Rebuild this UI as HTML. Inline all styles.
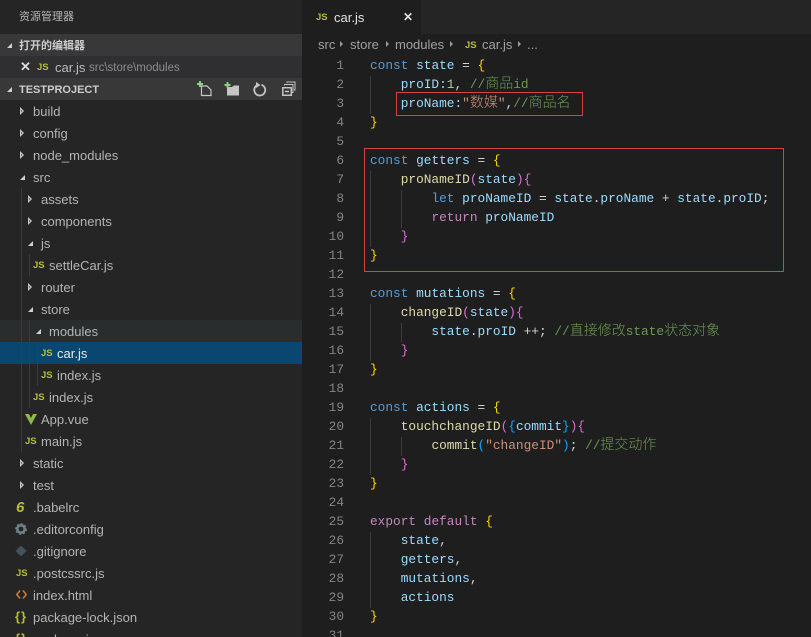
<!DOCTYPE html>
<html><head><meta charset="utf-8">
<style>
html,body{margin:0;padding:0;background:#1e1e1e}
#r{position:relative;width:811px;height:637px;overflow:hidden;background:#1e1e1e;font-family:"Liberation Sans","Noto Sans CJK SC",sans-serif}
#s{position:absolute;left:0;top:0;width:302px;height:637px;background:#252526}
.bar{position:absolute;left:0;width:302px}
.t{position:absolute;margin-top:1px;white-space:nowrap;font-size:13px;line-height:22px;height:22px;color:#b4b4b4}
.js{position:absolute;margin-top:1px;font:bold 9.500px/22px "Liberation Sans",sans-serif;color:#b5bd3e;height:22px}
.ac,.ar{position:absolute;width:0;height:0}
.ar{border-left:4px solid #c5c5c5;border-top:4px solid transparent;border-bottom:4px solid transparent}
.ar:after{content:"";position:absolute;left:-3.500px;top:-1.500px;width:0;height:0;border-left:1.500px solid #252526;border-top:1.500px solid transparent;border-bottom:1.500px solid transparent}
.ac{margin-top:1px;border-right:5px solid #d0d0d0;border-top:5px solid transparent}
.g{position:absolute;width:1px;background:#3c3c3c}
#c{position:absolute;left:0;top:0}
.l{position:absolute;white-space:pre;left:370px;font:12.800px/19px "Liberation Mono","Noto Sans CJK SC",monospace;height:19px;color:#9cdcfe}
.n{position:absolute;left:320px;width:24px;text-align:right;font:12.800px/19px "Liberation Mono",monospace;color:#858585;height:19px}
.k{color:#569cd6}.p{color:#c586c0}.y{color:#ffd700}.m{color:#da70d6}.b{color:#179fff}.f{color:#dcdcaa}.o{color:#d4d4d4}.s{color:#ce9178}.q{color:#6a9955}.w{color:#d4d4d4}.u{color:#b5cea8}
.box{position:absolute;border:1px solid #d9423e;box-sizing:border-box}
.cj{font-size:14px;line-height:1;font-weight:300}
.cr{position:absolute;font:13px/20px "Liberation Sans",sans-serif;color:#a0a0a0;top:35px;white-space:nowrap}
.ca{position:absolute;top:41px;width:0;height:0;border-left:3px solid #9a9a9a;border-top:3.500px solid transparent;border-bottom:3.500px solid transparent}
</style></head><body>
<div id="r">
<div id="s">
<div class="t" style="left:19px;top:5px;font-size:11px;color:#b5b5b5">资源管理器</div>
<div class="bar" style="top:34px;height:22px;background:#383838"></div>
<div class="bar" style="top:56px;height:22px;background:#2f2f31"></div>
<div class="bar" style="top:78px;height:22px;background:#383838"></div>
<div class="bar" style="top:320px;height:22px;background:#2a2d2e"></div>
<div class="bar" style="top:342px;height:22px;background:#094771"></div>

<div class="ac" style="left:7px;top:42px"></div>
<div class="t" style="left:19px;top:34px;font-size:11px;font-weight:bold;color:#cccccc">打开的编辑器</div>
<div class="t" style="left:20px;top:55px;font-size:13px;font-weight:bold;color:#dddddd">✕</div>
<div class="js" style="left:37px;top:56px">JS</div>
<div class="t" style="left:55px;top:56px;color:#bbbbbb">car.js</div>
<div class="t" style="left:89px;top:56px;font-size:11.500px;color:#8d8d8d">src\store\modules</div>
<div class="ac" style="left:7px;top:86px"></div>
<div class="t" style="left:19px;top:78px;font-size:11px;font-weight:bold;color:#cccccc">TESTPROJECT</div>

<svg style="position:absolute;left:190px;top:70px" width="120" height="40" fill="none">
<path d="M11.500 16h5.500l4 4v5.500H11.500z" stroke="#c5c5c5" stroke-width="1.200"/>
<path d="M7 14h6M10 11v6" stroke="#89d185" stroke-width="2"/>
<path d="M37 17h5l2-1.500h5V25.500H37z" fill="#c5c5c5"/>
<path d="M34.500 15h6M37.500 12v6" stroke="#89d185" stroke-width="2"/>
<path d="M71.500 14.800a5.500 5.500 0 1 1-4 .2" stroke="#c5c5c5" stroke-width="1.800"/>
<path d="M66 12l4.500 3-4.500 3z" fill="#c5c5c5"/>
<path d="M92.800 17.800h8.500v7.500h-8.500z" stroke="#c5c5c5" stroke-width="1.500"/>
<path d="M95 21.500h4" stroke="#c5c5c5" stroke-width="1.500"/>
<path d="M94.500 15.500v-1h8.500v8h-1M97 13v-1h8v8h-1" stroke="#c5c5c5" stroke-width="1"/>
</svg>

<div class="ar" style="left:20px;top:107px"></div><div class="t" style="left:33px;top:100px">build</div>
<div class="ar" style="left:20px;top:129px"></div><div class="t" style="left:33px;top:122px">config</div>
<div class="ar" style="left:20px;top:151px"></div><div class="t" style="left:33px;top:144px">node_modules</div>
<div class="ac" style="left:20px;top:174px"></div><div class="t" style="left:33px;top:166px">src</div>
<div class="g" style="left:21px;top:188px;height:264px"></div>
<div class="ar" style="left:28px;top:195px"></div><div class="t" style="left:41px;top:188px">assets</div>
<div class="ar" style="left:28px;top:217px"></div><div class="t" style="left:41px;top:210px">components</div>
<div class="ac" style="left:28px;top:240px"></div><div class="t" style="left:41px;top:232px">js</div>
<div class="g" style="left:29px;top:254px;height:22px"></div>
<div class="js" style="left:33px;top:254px">JS</div><div class="t" style="left:49px;top:254px">settleCar.js</div>
<div class="ar" style="left:28px;top:283px"></div><div class="t" style="left:41px;top:276px">router</div>
<div class="ac" style="left:28px;top:306px"></div><div class="t" style="left:41px;top:298px">store</div>
<div class="g" style="left:29px;top:320px;height:88px"></div>
<div class="ac" style="left:36px;top:328px"></div><div class="t" style="left:49px;top:320px">modules</div>
<div class="g" style="left:37px;top:342px;height:44px"></div>
<div class="js" style="left:41px;top:342px">JS</div><div class="t" style="left:57px;top:342px;color:#e8e8e8">car.js</div>
<div class="js" style="left:41px;top:364px">JS</div><div class="t" style="left:57px;top:364px">index.js</div>
<div class="js" style="left:33px;top:386px">JS</div><div class="t" style="left:49px;top:386px">index.js</div>
<svg style="position:absolute;left:24px;top:413px" width="14" height="13"><path d="M1 1h12L7 12z" fill="#8dbb4a"/><path d="M5 1h4L7 5z" fill="#252526"/></svg>
<div class="t" style="left:41px;top:408px">App.vue</div>
<div class="js" style="left:25px;top:430px">JS</div><div class="t" style="left:41px;top:430px">main.js</div>
<div class="ar" style="left:20px;top:459px"></div><div class="t" style="left:33px;top:452px">static</div>
<div class="ar" style="left:20px;top:481px"></div><div class="t" style="left:33px;top:474px">test</div>
<div class="t" style="left:16px;top:496px;font:italic bold 15px/22px 'Liberation Sans',sans-serif;color:#b5bd3e">6</div>
<div class="t" style="left:33px;top:496px">.babelrc</div>
<svg style="position:absolute;left:15px;top:523px" width="12" height="12"><circle cx="6" cy="6" r="3.700" fill="none" stroke="#6d8086" stroke-width="2.600"/><circle cx="6" cy="6" r="5.200" fill="none" stroke="#6d8086" stroke-width="1.400" stroke-dasharray="2 2"/></svg>
<div class="t" style="left:33px;top:518px">.editorconfig</div>
<svg style="position:absolute;left:15px;top:545px" width="12" height="12"><path d="M6 .500L11.500 6 6 11.500.500 6z" fill="#41535b"/></svg>
<div class="t" style="left:33px;top:540px">.gitignore</div>
<div class="js" style="left:16px;top:562px">JS</div><div class="t" style="left:33px;top:562px">.postcssrc.js</div>
<svg style="position:absolute;left:16px;top:590px" width="11" height="9" fill="none"><path d="M4 .500L.800 4.500 4 8.500M7 .500l3.200 4-3.200 4" stroke="#c8793e" stroke-width="1.500"/></svg>
<div class="t" style="left:33px;top:584px">index.html</div>
<div class="t" style="left:15px;top:605px;font-weight:bold;font-size:13px;color:#b5bd3e;letter-spacing:1px">{}</div>
<div class="t" style="left:33px;top:606px">package-lock.json</div>
<div class="t" style="left:15px;top:627px;font-weight:bold;font-size:13px;color:#b5bd3e;letter-spacing:1px">{}</div>
<div class="t" style="left:33px;top:628px">package.json</div>
</div>

<div style="position:absolute;left:302px;top:0;width:509px;height:34px;background:#252526"></div>
<div style="position:absolute;left:302px;top:0;width:119px;height:34px;background:#1e1e1e"></div>
<div class="js" style="left:316px;top:6px">JS</div>
<div class="t" style="left:334px;top:6px;color:#e0e0e0">car.js</div>
<div class="t" style="left:403px;top:5px;font-size:12px;font-weight:bold;color:#dddddd">✕</div>

<div class="cr" style="left:318px">src</div><div class="ca" style="left:340px"></div>
<div class="cr" style="left:350px">store</div><div class="ca" style="left:386px"></div>
<div class="cr" style="left:395px">modules</div><div class="ca" style="left:450px"></div>
<div class="js" style="left:465px;top:34px;color:#b5bd3e">JS</div>
<div class="cr" style="left:482px">car.js</div><div class="ca" style="left:518px"></div>
<div class="cr" style="left:527px">...</div>

<div class="g" style="left:370px;top:76px;height:38px"></div>
<div class="g" style="left:370px;top:171px;height:76px"></div>
<div class="g" style="left:401px;top:190px;height:38px"></div>
<div class="g" style="left:370px;top:304px;height:57px"></div>
<div class="g" style="left:401px;top:323px;height:19px"></div>
<div class="g" style="left:370px;top:418px;height:57px"></div>
<div class="g" style="left:401px;top:437px;height:19px"></div>
<div class="g" style="left:370px;top:532px;height:76px"></div>

<div id="c">
<div class="n" style="top:56px">1</div><div class="l" style="top:56px"><span class="k">const</span> state <span class="w">=</span> <span class="y">{</span></div>
<div class="n" style="top:75px">2</div><div class="l" style="top:75px">    proID:<span class="u">1</span><span class="w">,</span> <span class="q">//<span class="cj">商品</span>id</span></div>
<div class="n" style="top:94px">3</div><div class="l" style="top:94px">    proName:<span class="s">"<span class="cj">数媒</span>"</span><span class="w">,</span><span class="q">//<span class="cj">商品名</span></span></div>
<div class="n" style="top:113px">4</div><div class="l" style="top:113px"><span class="y">}</span></div>
<div class="n" style="top:132px">5</div>
<div class="n" style="top:151px">6</div><div class="l" style="top:151px"><span class="k">const</span> getters <span class="w">=</span> <span class="y">{</span></div>
<div class="n" style="top:170px">7</div><div class="l" style="top:170px">    <span class="f">proNameID</span><span class="m">(</span>state<span class="m">){</span></div>
<div class="n" style="top:189px">8</div><div class="l" style="top:189px">        <span class="k">let</span> proNameID <span class="w">=</span> state<span class="w">.</span>proName <span class="w">+</span> state<span class="w">.</span>proID<span class="w">;</span></div>
<div class="n" style="top:208px">9</div><div class="l" style="top:208px">        <span class="p">return</span> proNameID</div>
<div class="n" style="top:227px">10</div><div class="l" style="top:227px">    <span class="m">}</span></div>
<div class="n" style="top:246px">11</div><div class="l" style="top:246px"><span class="y">}</span></div>
<div class="n" style="top:265px">12</div>
<div class="n" style="top:284px">13</div><div class="l" style="top:284px"><span class="k">const</span> mutations <span class="w">=</span> <span class="y">{</span></div>
<div class="n" style="top:303px">14</div><div class="l" style="top:303px">    <span class="f">changeID</span><span class="m">(</span>state<span class="m">){</span></div>
<div class="n" style="top:322px">15</div><div class="l" style="top:322px">        state<span class="w">.</span>proID <span class="w">++;</span> <span class="q">//<span class="cj">直接修改</span>state<span class="cj">状态对象</span></span></div>
<div class="n" style="top:341px">16</div><div class="l" style="top:341px">    <span class="m">}</span></div>
<div class="n" style="top:360px">17</div><div class="l" style="top:360px"><span class="y">}</span></div>
<div class="n" style="top:379px">18</div>
<div class="n" style="top:398px">19</div><div class="l" style="top:398px"><span class="k">const</span> actions <span class="w">=</span> <span class="y">{</span></div>
<div class="n" style="top:417px">20</div><div class="l" style="top:417px">    <span class="f">touchchangeID</span><span class="m">(</span><span class="b">{</span>commit<span class="b">}</span><span class="m">){</span></div>
<div class="n" style="top:436px">21</div><div class="l" style="top:436px">        <span class="f">commit</span><span class="b">(</span><span class="s">"changeID"</span><span class="b">)</span><span class="w">;</span> <span class="q">//<span class="cj">提交动作</span></span></div>
<div class="n" style="top:455px">22</div><div class="l" style="top:455px">    <span class="m">}</span></div>
<div class="n" style="top:474px">23</div><div class="l" style="top:474px"><span class="y">}</span></div>
<div class="n" style="top:493px">24</div>
<div class="n" style="top:512px">25</div><div class="l" style="top:512px"><span class="p">export</span> <span class="p">default</span> <span class="y">{</span></div>
<div class="n" style="top:531px">26</div><div class="l" style="top:531px">    state<span class="w">,</span></div>
<div class="n" style="top:550px">27</div><div class="l" style="top:550px">    getters<span class="w">,</span></div>
<div class="n" style="top:569px">28</div><div class="l" style="top:569px">    mutations<span class="w">,</span></div>
<div class="n" style="top:588px">29</div><div class="l" style="top:588px">    actions</div>
<div class="n" style="top:607px">30</div><div class="l" style="top:607px"><span class="y">}</span></div>
<div class="n" style="top:626px">31</div>
</div>

<div class="box" style="left:396px;top:92px;width:187px;height:24px"></div>
<div class="box" style="left:364px;top:148px;width:420px;height:124px"></div>
</div>
</body></html>
